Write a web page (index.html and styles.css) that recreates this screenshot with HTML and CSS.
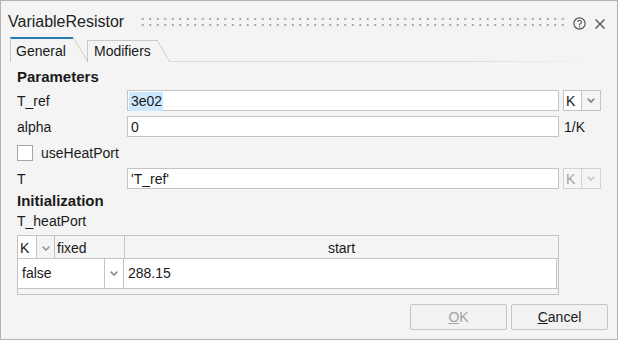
FILE: index.html
```html
<!DOCTYPE html>
<html lang="en">
<head>
    <meta charset="UTF-8">
    <title>VariableResistor</title>
    <link rel="stylesheet" href="styles.css">
</head>
<body>
    <div class="dialog">
        <div class="titlebar">
            <span class="title">VariableResistor</span>
            <div class="grip"></div>
            <svg class="help" viewBox="0 0 13 13">
                <circle cx="6.5" cy="6.5" r="5.6" fill="none" stroke="#555" stroke-width="1.2"/>
                <path d="M4.7 5.1a1.85 1.85 0 1 1 2.6 1.7c-0.55 0.3-0.8 0.6-0.8 1.2v0.3" fill="none" stroke="#555" stroke-width="1.2"/>
                <circle cx="6.5" cy="9.8" r="0.75" fill="#555"/>
            </svg>
            <svg class="close" viewBox="0 0 10 10">
                <path d="M0.5 0.5L9.5 9.5M9.5 0.5L0.5 9.5" stroke="#555" stroke-width="1.4"/>
            </svg>
        </div>

        <div class="tabs">
            <div class="tab active">General</div>
            <div class="tab">Modifiers</div>
            <div class="tab-line"></div>
        </div>

        <div class="content">
            <div class="group-title">Parameters</div>
            <div class="params">
                <label>T_ref</label>
                <div class="field"><span class="selected">3e02</span></div>
                <div class="unit">
                    <span class="unit-value">K</span>
                    <span class="unit-arrow"><svg viewBox="0 0 8 5"><path d="M0.7 0.7L4 4L7.3 0.7" fill="none" stroke="currentColor" stroke-width="1.8"/></svg></span>
                </div>

                <label>alpha</label>
                <div class="field">0</div>
                <div class="unit-text">1/K</div>

                <div class="check-row"><span class="checkbox"></span>useHeatPort</div>

                <label>T</label>
                <div class="field">'T_ref'</div>
                <div class="unit disabled">
                    <span class="unit-value">K</span>
                    <span class="unit-arrow"><svg viewBox="0 0 8 5"><path d="M0.7 0.7L4 4L7.3 0.7" fill="none" stroke="currentColor" stroke-width="1.8"/></svg></span>
                </div>
            </div>

            <div class="group-title">Initialization</div>
            <div class="sub-label">T_heatPort</div>

            <div class="param-table">
                <div class="thead">
                    <div class="th th-unit">K</div>
                    <div class="th th-arrow"><svg viewBox="0 0 8 5"><path d="M0.7 0.7L4 4L7.3 0.7" fill="none" stroke="currentColor" stroke-width="1.7"/></svg></div>
                    <div class="th th-fixed">fixed</div>
                    <div class="th th-start">start</div>
                </div>
                <div class="tbody">
                    <div class="td combo-value">false</div>
                    <div class="td combo-arrow"><svg viewBox="0 0 8 5"><path d="M0.7 0.7L4 4L7.3 0.7" fill="none" stroke="currentColor" stroke-width="1.7"/></svg></div>
                    <div class="td value">288.15</div>
                </div>
                <div class="tfoot"></div>
            </div>
        </div>

        <div class="footer">
            <button class="btn" disabled><u>O</u>K</button>
            <button class="btn"><u>C</u>ancel</button>
        </div>
    </div>
</body>
</html>
```

FILE: styles.css
```css
* {
    margin: 0;
    padding: 0;
    box-sizing: border-box;
}

html, body {
    width: 100%;
    height: 100%;
}

body {
    font-family: "Liberation Sans", Arial, sans-serif;
    font-size: 14px;
    color: #1a1a1a;
    background-color: #f4f4f4;
}

.dialog {
    width: 618px;
    height: 340px;
    border: 1px solid #b3b3b3;
    background-color: #f4f4f4;
    display: flex;
    flex-direction: column;
}

/* title bar */

.titlebar {
    height: 36px;
    flex-shrink: 0;
    display: flex;
    align-items: flex-start;
    padding: 0 12px 0 7px;
}

.title {
    font-size: 16px;
    line-height: 20px;
    padding-top: 11px;
    color: #222;
}

.grip {
    flex: 1;
    height: 12px;
    margin: 15px 0 0 15px;
    background-image: radial-gradient(circle, #a4a4a4 0.9px, transparent 1.3px);
    background-size: 7.5px 6px;
}

.help {
    width: 13px;
    height: 13px;
    margin: 16px 0 0 5px;
}

.close {
    width: 10px;
    height: 10px;
    margin: 18px 0 0 9px;
}

/* tabs */

.tabs {
    height: 25px;
    flex-shrink: 0;
    display: flex;
    align-items: flex-end;
    padding-left: 9px;
}

.tab {
    position: relative;
    width: 70px;
    height: 22px;
    margin-left: 14px;
    padding: 2px 0 0 6px;
    line-height: 16px;
    border-left: 1px solid #c9c9c9;
    border-top: 1px solid #c9c9c9;
}

.tab::after {
    content: "";
    position: absolute;
    top: -1px;
    left: 100%;
    width: 13px;
    height: calc(100% + 1px);
    background: linear-gradient(to top right, transparent calc(50% - 0.7px), #c4c4c4 50%, transparent calc(50% + 0.7px));
}

.tab.active {
    width: 63px;
    height: 25px;
    margin-left: 0;
    padding: 4px 0 0 5px;
    border-top: 2px solid #2b79b5;
    z-index: 1;
}

.tab.active::after {
    top: -2px;
    width: 15px;
    height: calc(100% + 2px);
}

.tab-line {
    flex: 1;
    height: 1px;
    margin: 0 22px 0 13px;
    background: linear-gradient(to right, #dcdcdc 70%, rgba(220, 220, 220, 0));
}

/* parameters */

.content {
    padding: 5px 0 0 16px;
}

.group-title {
    font-size: 15px;
    font-weight: bold;
    line-height: 20px;
}

.params {
    display: grid;
    grid-template-columns: 106px 432px 38px;
    grid-auto-rows: 21px;
    column-gap: 4px;
    row-gap: 5px;
    margin: 3px 0 2px;
}

.params label {
    padding-top: 1px;
    line-height: 20px;
}

.field {
    background-color: #fff;
    border: 1px solid #c4c4c4;
    padding: 0 3px;
    line-height: 20px;
}

.selected {
    display: inline-block;
    height: 19px;
    line-height: 19px;
    margin-left: -2px;
    padding: 0 1px 0 2px;
    background-color: #cce8ff;
}

.unit {
    display: flex;
}

.unit-value {
    width: 19px;
    padding: 1px 0 0 2px;
    line-height: 18px;
    background-color: #fff;
    border: 1px solid #c4c4c4;
}

.unit-arrow {
    flex: 1;
    display: flex;
    align-items: center;
    justify-content: center;
    color: #8c8c8c;
    border: 1px solid #c4c4c4;
    border-left: none;
}

.unit-arrow svg,
.th-arrow svg,
.combo-arrow svg {
    width: 8px;
    height: 5px;
}

.unit.disabled .unit-value {
    color: #a3a3a3;
    background-color: #f6f6f6;
    border-color: #d2d2d2;
}

.unit.disabled .unit-arrow {
    color: #cccccc;
    border-color: #d2d2d2;
}

.unit-text {
    padding: 1px 0 0 1px;
    line-height: 20px;
}

.check-row {
    grid-column: 1 / -1;
    display: flex;
    align-items: center;
    gap: 8px;
    padding-top: 1px;
}

.checkbox {
    width: 16px;
    height: 16px;
    background-color: #fff;
    border: 1px solid #a6a6a6;
}

/* initialization table */

.sub-label {
    line-height: 21px;
    margin-bottom: 3px;
}

.param-table {
    width: 542px;
    border: 1px solid #c4c4c4;
}

.thead {
    display: flex;
    height: 23px;
    border-bottom: 1px solid #c4c4c4;
}

.th {
    padding-top: 2px;
    line-height: 20px;
    border-right: 1px solid #c4c4c4;
}

.th-unit {
    width: 19px;
    padding-left: 2px;
    background-color: #fff;
}

.th-arrow {
    width: 18px;
    display: flex;
    align-items: center;
    justify-content: center;
    color: #999;
}

.th-fixed {
    width: 70px;
    padding-left: 2px;
}

.th-start {
    flex: 1;
    text-align: center;
    border-right: none;
}

.tbody {
    display: flex;
    height: 30px;
    border-bottom: 1px solid #c4c4c4;
}

.td {
    line-height: 29px;
    background-color: #fff;
    border-right: 1px solid #c4c4c4;
}

.combo-value {
    width: 87px;
    padding-left: 4px;
}

.combo-arrow {
    width: 19px;
    display: flex;
    align-items: center;
    justify-content: center;
    color: #8c8c8c;
}

.value {
    flex: 1;
    margin-right: 1px;
    padding-left: 4px;
}

.tfoot {
    height: 5px;
}

/* buttons */

.footer {
    margin-top: auto;
    display: flex;
    justify-content: flex-end;
    gap: 4px;
    padding: 0 9px 9px 0;
}

.btn {
    width: 97px;
    height: 26px;
    font: inherit;
    color: #1a1a1a;
    background-color: #f2f2f2;
    border: 1px solid #c6c6c6;
    border-radius: 2px;
}

.btn:disabled {
    color: #a3a3a3;
}
```
